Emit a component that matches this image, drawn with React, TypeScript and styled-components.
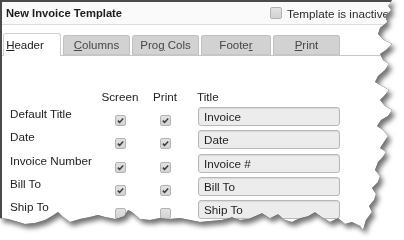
import React from 'react';
import styled, { createGlobalStyle } from 'styled-components';

const GlobalStyle = createGlobalStyle`
  html, body {
    margin: 0;
    padding: 0;
    background: #ffffff;
    overflow: hidden;
  }
  body {
    font-family: "Liberation Sans", Arial, sans-serif;
    font-size: 11.7px;
    color: #222;
  }
`;

// torn paper outline, right edge going down then bottom edge going left
const tornEdge = [
  [392, 0], [388, 6], [391, 10], [385, 16], [387, 22], [380, 28], [378, 34], [384, 40],
  [392, 44], [386, 50], [380, 54], [383, 60], [389, 64], [385, 70], [378, 76], [375, 82],
  [382, 86], [389, 90], [384, 96], [380, 100], [385, 106], [392, 110], [388, 116], [381, 120],
  [377, 126], [383, 130], [388, 136], [384, 142], [380, 148], [386, 152], [382, 158], [378, 162],
  [375, 170], [380, 176], [378, 182], [372, 188], [376, 194], [374, 200], [369, 206], [372, 212],
  [366, 220], [363, 230], [360, 226], [352, 222], [345, 224], [338, 218], [330, 222], [322, 217],
  [315, 212], [308, 216], [300, 218], [292, 222], [285, 220], [278, 214], [270, 218], [262, 213],
  [255, 216], [248, 219], [240, 220], [232, 217], [222, 220], [210, 221], [200, 222], [190, 220],
  [180, 218], [170, 219], [160, 218], [150, 220], [140, 219], [132, 212], [128, 210], [124, 216],
  [115, 219], [105, 217], [98, 215], [90, 217], [80, 219], [70, 222], [62, 216], [58, 212],
  [52, 216], [45, 220], [35, 223], [25, 224], [15, 221], [8, 219], [0, 218],
];

const clip = `polygon(0px 0px, ${tornEdge.map(([x, y]) => `${x}px ${y}px`).join(', ')})`;

const Shadow = styled.div`
  width: 404px;
  height: 240px;
  filter: drop-shadow(0 0 0.6px rgba(0, 0, 0, 0.95)) drop-shadow(3px 4px 2.5px rgba(0, 0, 0, 0.55));
`;

const Paper = styled.div<{ $clip: string }>`
  width: 404px;
  height: 240px;
  box-sizing: border-box;
  background: #ffffff;
  border-top: 2px solid #4a4a4a;
  border-left: 2px solid #4a4a4a;
  clip-path: ${({ $clip }) => $clip};
  display: flex;
  flex-direction: column;
`;

const TitleBar = styled.div`
  height: 22px;
  display: flex;
  align-items: center;
  padding-left: 4px;
  background: #fafafa;
  border-bottom: 1px solid #dddddd;
`;

const Title = styled.div`
  font-weight: bold;
  font-size: 11.2px;
  color: #1c1c1c;
`;

const Inactive = styled.label`
  margin-left: auto;
  margin-right: 14px;
  width: 120px;
  flex-shrink: 0;
  display: flex;
  align-items: center;
  gap: 5px;
  white-space: nowrap;
  color: #2a2a2a;
`;

const TabBar = styled.div`
  margin-top: 8px;
  padding-left: 1px;
  height: 22px;
  display: flex;
  align-items: flex-end;
  gap: 2px;
  border-bottom: 1px solid #c6c6c6;
`;

const Tab = styled.div<{ $active?: boolean; $w: number }>`
  width: ${({ $w }) => $w}px;
  height: ${({ $active }) => ($active ? 23 : 20)}px;
  margin-bottom: ${({ $active }) => ($active ? -1 : 0)}px;
  box-sizing: border-box;
  display: flex;
  align-items: center;
  justify-content: center;
  padding: ${({ $active }) => ($active ? '0 14px 1px 0' : '0')};
  background: ${({ $active }) => ($active ? '#ffffff' : '#d2d2d2')};
  border: 1px solid ${({ $active }) => ($active ? '#cfcfcf' : '#c0c0c0')};
  border-bottom: ${({ $active }) => ($active ? 'none' : '1px solid #c6c6c6')};
  border-radius: 3px 3px 0 0;
  color: ${({ $active }) => ($active ? '#222' : '#474747')};
  font-size: 11.5px;
`;

const Body = styled.div`
  padding: 34px 0 0 8px;
  display: grid;
  grid-template-columns: 86px 48px 42px 154px;
  grid-template-rows: 13px;
  grid-auto-rows: 19px;
  row-gap: 4.2px;
`;

const ColHead = styled.div<{ $center?: boolean }>`
  line-height: 13px;
  color: #222;
  justify-self: ${({ $center }) => ($center ? 'center' : 'start')};
  padding-left: ${({ $center }) => ($center ? 0 : 11)}px;
`;

const RowLabel = styled.div`
  line-height: 13px;
  align-self: start;
  color: #222;
  white-space: nowrap;
`;

const CheckCell = styled.div`
  display: flex;
  justify-content: center;
  align-items: flex-start;
  padding-top: 8px;
`;

const Box = styled.span<{ $size?: number }>`
  width: ${({ $size }) => $size ?? 11}px;
  height: ${({ $size }) => $size ?? 11}px;
  box-sizing: border-box;
  display: inline-flex;
  align-items: center;
  justify-content: center;
  background: linear-gradient(#e2e2e2, #d2d2d2);
  border: 1px solid #b3b3b3;
  border-radius: 2px;
`;

const TextBox = styled.div`
  margin-left: 12px;
  width: 142px;
  height: 19px;
  box-sizing: border-box;
  display: flex;
  align-items: center;
  padding-left: 5px;
  background: #ececec;
  border: 1px solid #b8b8b8;
  border-radius: 3px;
  box-shadow: inset 0 1px 1px rgba(0, 0, 0, 0.08);
  color: #1e1e1e;
`;

const Check: React.FC<{ on: boolean }> = ({ on }) => (
  <Box>
    {on && (
      <svg width="9" height="9" viewBox="0 0 9 9">
        <polyline points="1.8,4.6 3.6,6.4 7.2,2.4" fill="none" stroke="#3c3c3c" strokeWidth="1.5" />
      </svg>
    )}
  </Box>
);

const tabs = [
  { label: <><u>H</u>eader</>, w: 58, active: true },
  { label: <><u>C</u>olumns</>, w: 67 },
  { label: <>Pro<u>g</u> Cols</>, w: 67 },
  { label: <>Foote<u>r</u></>, w: 70 },
  { label: <><u>P</u>rint</>, w: 67 },
];

const rows = [
  { label: 'Default Title', title: 'Invoice', on: true },
  { label: 'Date', title: 'Date', on: true },
  { label: 'Invoice Number', title: 'Invoice #', on: true },
  { label: 'Bill To', title: 'Bill To', on: true },
  { label: 'Ship To', title: 'Ship To', on: false },
];

const App: React.FC = () => (
  <>
    <GlobalStyle />
    <Shadow>
      <Paper $clip={clip}>
        <TitleBar>
          <Title>New Invoice Template</Title>
          <Inactive>
            <Box $size={12} />
            Template is inactive
          </Inactive>
        </TitleBar>

        <TabBar>
          {tabs.map((tab, i) => (
            <Tab key={i} $active={tab.active} $w={tab.w}>
              <span>{tab.label}</span>
            </Tab>
          ))}
        </TabBar>

        <Body>
          <div />
          <ColHead $center>Screen</ColHead>
          <ColHead $center>Print</ColHead>
          <ColHead>Title</ColHead>
          {rows.map((row) => (
            <React.Fragment key={row.label}>
              <RowLabel>{row.label}</RowLabel>
              <CheckCell>
                <Check on={row.on} />
              </CheckCell>
              <CheckCell>
                <Check on={row.on} />
              </CheckCell>
              <TextBox>{row.title}</TextBox>
            </React.Fragment>
          ))}
        </Body>
      </Paper>
    </Shadow>
  </>
);

export default App;
